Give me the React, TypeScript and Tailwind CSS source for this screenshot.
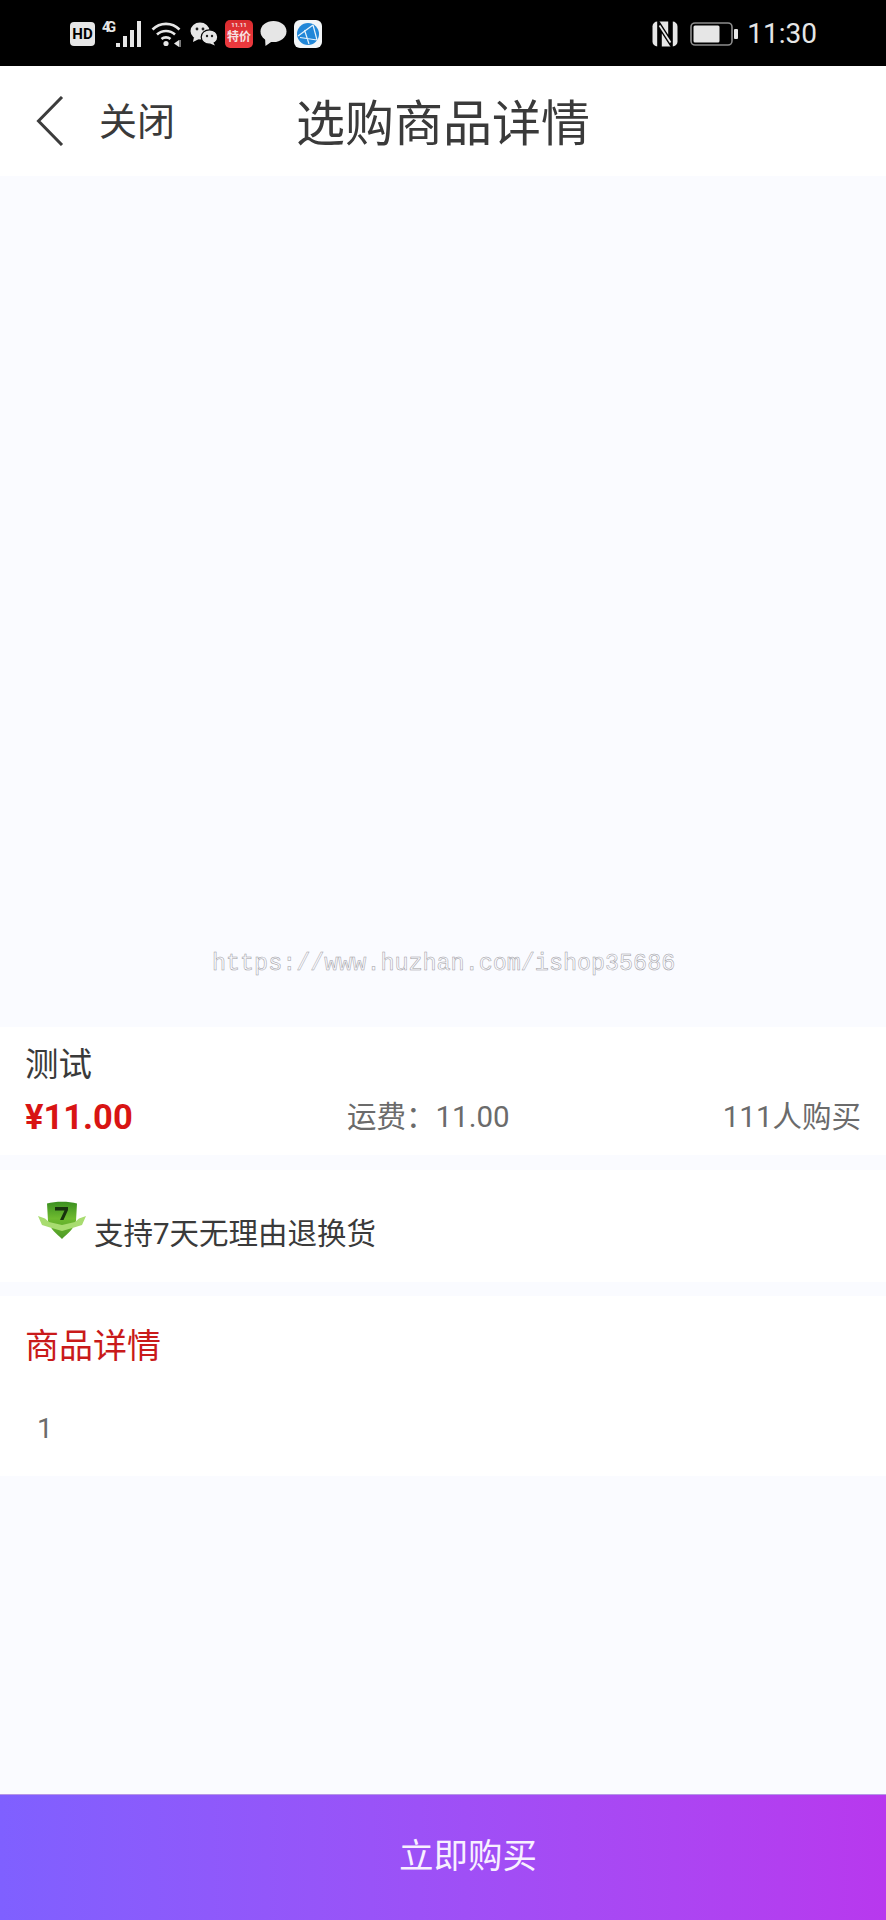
import React from "react";

const cjk = "font-['Roboto','Noto_Sans_CJK_SC',sans-serif]";

function HdIcon() {
  return (
    <div className="flex h-[24px] w-[25px] items-center justify-center rounded-[4px] bg-[#e6e6e6] font-['Roboto',sans-serif] text-[15px] font-bold leading-none text-black">
      HD
    </div>
  );
}

function SignalIcon() {
  return (
    <svg width="42" height="28" viewBox="0 0 42 28">
      <text x="0" y="12" fontSize="14" fontWeight="700" fill="#e6e6e6" fontFamily="Roboto, sans-serif" textLength="14">4G</text>
      <rect x="14" y="23" width="4" height="4" fill="#e6e6e6" />
      <rect x="21" y="16" width="4" height="11" fill="#e6e6e6" />
      <rect x="28" y="10" width="4" height="17" fill="#e6e6e6" />
      <rect x="35" y="1" width="4" height="26" fill="#e6e6e6" />
    </svg>
  );
}

function WifiIcon() {
  return (
    <svg width="32" height="26" viewBox="0 0 32 26" fill="none" stroke="#e6e6e6" strokeWidth="2.6">
      <path d="M1.5 8.5C9 1 21 1 28.5 8.5" />
      <path d="M6 13.5C11 8.8 19 8.8 24 13.5" />
      <path d="M10.5 18C13 15.8 17 15.8 19.5 18" />
      <circle cx="15" cy="22.5" r="2.6" fill="#e6e6e6" stroke="none" />
      <path d="M23 22.5l5-3.5v7z" fill="#e6e6e6" stroke="none" />
      <path d="M29 19v7" stroke="#777" strokeWidth="2" />
    </svg>
  );
}

function WechatIcon() {
  return (
    <svg width="28" height="24" viewBox="0 0 28 24">
      <ellipse cx="10" cy="9" rx="9.5" ry="8.5" fill="#e6e6e6" />
      <path d="M4 15l-1 5 6-3z" fill="#e6e6e6" />
      <circle cx="7" cy="7" r="1.4" fill="#222" />
      <circle cx="13" cy="7" r="1.4" fill="#222" />
      <ellipse cx="19.5" cy="15" rx="8.3" ry="7.2" fill="#e6e6e6" stroke="#000" strokeWidth="1.2" />
      <path d="M23 20l2 3.5-5-2z" fill="#e6e6e6" />
      <circle cx="17" cy="14" r="1.2" fill="#222" />
      <circle cx="22" cy="14" r="1.2" fill="#222" />
    </svg>
  );
}

function SaleIcon() {
  return (
    <div className="flex h-[28px] w-[28px] flex-col items-center rounded-[5px] bg-gradient-to-b from-[#d92b2e] to-[#ee3b40] text-[#f7e3e3]">
      <span className="font-['Roboto',sans-serif] text-[6px] font-bold leading-[9px]">11.11</span>
      <span className="font-['Noto_Sans_CJK_SC',sans-serif] text-[12px] font-bold leading-[14px]">特价</span>
    </div>
  );
}

function BubbleIcon() {
  return (
    <svg width="27" height="26" viewBox="0 0 27 26">
      <ellipse cx="13.5" cy="10.5" rx="13" ry="10.5" fill="#e6e6e6" />
      <path d="M5 16l0.5 9 7-5z" fill="#e6e6e6" />
    </svg>
  );
}

function GlobeIcon() {
  return (
    <div className="flex h-[28px] w-[28px] items-center justify-center rounded-[6px] bg-[#f2f5f7]">
      <svg width="24" height="24" viewBox="0 0 24 24" fill="none">
        <circle cx="12" cy="12" r="11" fill="#2187d8" />
        <path d="M2 14L17 3M4 15.5L21 18M8.5 8L13 22M17 3l4 15" stroke="#e8f3fb" strokeWidth="1.2" />
      </svg>
    </div>
  );
}

function NfcIcon() {
  return (
    <svg width="26" height="26" viewBox="0 0 26 26" fill="none">
      <rect x="0.5" y="0.5" width="25" height="25" rx="5" fill="#e6e6e6" />
      <path d="M7.5 26V4.5L18.5 21.5V0" stroke="#000" strokeWidth="4.6" />
      <path d="M7.5 4.5L18.5 21.5" stroke="#e6e6e6" strokeWidth="1.8" />
    </svg>
  );
}

function BatteryIcon() {
  return (
    <svg width="48" height="24" viewBox="0 0 48 24">
      <rect x="1" y="1" width="41" height="22" rx="4" fill="none" stroke="#8c8c8c" strokeWidth="1.6" />
      <rect x="3.5" y="3.5" width="26" height="17" rx="1.5" fill="#e6e6e6" />
      <rect x="44" y="7" width="4" height="10" rx="1" fill="#e6e6e6" />
    </svg>
  );
}

function BackIcon() {
  return (
    <svg width="28" height="50" viewBox="0 0 28 50" fill="none" stroke="#3c3c3c" strokeWidth="3">
      <path d="M26 1L2.5 25L26 49" />
    </svg>
  );
}

function ShieldIcon() {
  return (
    <svg width="48" height="38" viewBox="0 0 48 38">
      <defs>
        <linearGradient id="sh" x1="0" y1="0" x2="0" y2="1">
          <stop offset="0" stopColor="#3a8f20" />
          <stop offset="0.45" stopColor="#6fbb30" />
          <stop offset="1" stopColor="#4d9a26" />
        </linearGradient>
      </defs>
      <path d="M9 2.5C17 0 31 0 39 2.5L38 20C36 28 29 33 24 38C19 33 12 28 10 20Z" fill="url(#sh)" />
      <path d="M0 15L7 17.5L11 21L24 24L37 21L41 17.5L48 15L44 24L36 26.5L24 30L12 26.5L4 24Z" fill="#a8dc70" />
      <path d="M17 6H30V9L25.5 19H22L26.5 9.5H17Z" fill="#17320e" />
    </svg>
  );
}

export default function App() {
  return (
    <div className={`relative flex h-[1920px] w-[886px] flex-col overflow-hidden bg-[#fafbff] ${cjk}`}>
      <header className="flex h-[66px] items-center bg-black pt-[2px]">
        <div className="ml-[70px] flex items-center gap-[7px]">
          <HdIcon />
          <SignalIcon />
          <WifiIcon />
          <WechatIcon />
          <SaleIcon />
          <BubbleIcon />
          <GlobeIcon />
        </div>
        <div className="ml-auto mr-[69px] flex items-center">
          <NfcIcon />
          <div className="ml-[12px]"><BatteryIcon /></div>
          <span className="ml-[9px] font-['Roboto',sans-serif] text-[28px] font-normal leading-none text-[#e6e6e6]">11:30</span>
        </div>
      </header>

      <nav className="flex h-[110px] items-center bg-white text-[#3a3a3a]">
        <div className="ml-[36px]"><BackIcon /></div>
        <span className="ml-[35px] mt-[2px] text-[38px] leading-none">关闭</span>
        <span className="ml-[121px] mt-[6px] text-[49px] leading-none">选购商品详情</span>
      </nav>

      <div className="relative h-[851px]">
        <span className="absolute left-[212px] top-[777px] font-['Liberation_Mono',monospace] text-[23.4px] leading-none text-transparent [-webkit-text-stroke:0.5px_#9a9aa0]">
          https://www.huzhan.com/ishop35686
        </span>
      </div>

      <section className="flex h-[128px] flex-col bg-white pl-[25px] pr-[25px]">
        <h1 className="mt-[18px] text-[33.5px] font-normal leading-[40px] text-[#3a3a3a]">测试</h1>
        <div className="relative mt-[10px] flex items-center justify-between">
          <span className="font-['Roboto',sans-serif] text-[34.5px] font-bold leading-[44px] text-[#d81414]">¥11.00</span>
          <span className="absolute left-[322px] text-[29.5px] leading-[44px] text-[#6b6b6b]">运费：11.00</span>
          <span className="text-[29.5px] leading-[44px] text-[#6b6b6b]">111人购买</span>
        </div>
      </section>

      <section className="mt-[15px] flex h-[112px] items-center bg-white pl-[38px]">
        <div className="mb-[12px]"><ShieldIcon /></div>
        <span className="ml-[8px] mt-[18px] text-[29.5px] leading-none text-[#3a3a3a]">支持7天无理由退换货</span>
      </section>

      <section className="mt-[14px] h-[180px] bg-white pl-[25px]">
        <h2 className="pt-[28px] text-[34px] font-normal leading-[44px] text-[#c91a1a]">商品详情</h2>
        <p className="ml-[12px] mt-[44px] text-[28px] leading-[34px] text-[#6b6b6b]">1</p>
      </section>

      <button className="mt-auto flex h-[126px] w-full items-center justify-center border-t border-[#b596e6] bg-gradient-to-r from-[#7f60ff] to-[#b838ee] pb-[2px] pl-[50px] text-[34.5px] leading-none text-[#f8f0ff]">
        立即购买
      </button>
    </div>
  );
}
